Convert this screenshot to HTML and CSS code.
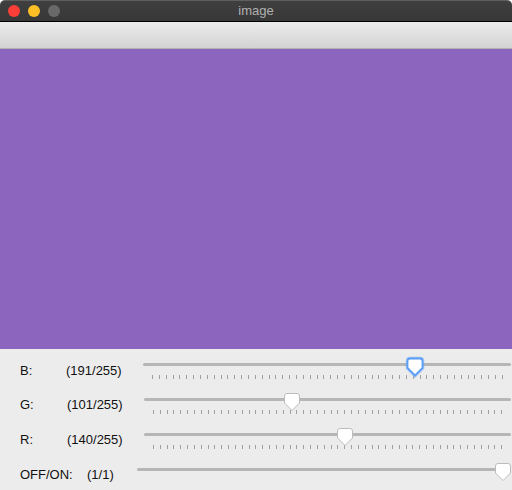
FILE: index.html
```html
<!DOCTYPE html>
<html>
<head>
<meta charset="utf-8">
<link rel="stylesheet" href="styles.css">
</head>
<body>
<div class="window">
  <div class="titlebar">
    <div class="lights">
      <span class="light red"></span>
      <span class="light yellow"></span>
      <span class="light gray"></span>
    </div>
    <div class="title">image</div>
    <div></div>
  </div>
  <div class="toolbar"></div>
  <div class="canvas"></div>
  <div class="controls">
    <div class="row row-b">
      <span class="name">B:</span>
      <span class="value">(191/255)</span>
      <div class="slider" style="--p:0.74902">
        <div class="track"></div>
        <div class="ticks"><i></i><i></i><i></i><i></i><i></i><i></i><i></i><i></i><i></i><i></i><i></i><i></i><i></i><i></i><i></i><i></i><i></i><i></i><i></i><i></i><i></i><i></i><i></i><i></i><i></i><i></i><i></i><i></i><i></i><i></i><i></i><i></i><i></i><i></i><i></i><i></i><i></i><i></i><i></i><i></i><i></i><i></i><i></i><i></i><i></i><i></i><i></i><i></i><i></i><i></i><i></i><i></i></div>
        <svg class="handle focus" width="16" height="18" viewBox="0 0 16 18"><path class="glow" d="M3 0.5 H13 Q15.5 0.5 15.5 3 V10 L8 17.5 L0.5 10 V3 Q0.5 0.5 3 0.5 Z"/><path class="body" d="M3 0.5 H13 Q15.5 0.5 15.5 3 V10 L8 17.5 L0.5 10 V3 Q0.5 0.5 3 0.5 Z"/></svg>
      </div>
    </div>
    <div class="row row-g">
      <span class="name">G:</span>
      <span class="value">(101/255)</span>
      <div class="slider" style="--p:0.39608">
        <div class="track"></div>
        <div class="ticks"><i></i><i></i><i></i><i></i><i></i><i></i><i></i><i></i><i></i><i></i><i></i><i></i><i></i><i></i><i></i><i></i><i></i><i></i><i></i><i></i><i></i><i></i><i></i><i></i><i></i><i></i><i></i><i></i><i></i><i></i><i></i><i></i><i></i><i></i><i></i><i></i><i></i><i></i><i></i><i></i><i></i><i></i><i></i><i></i><i></i><i></i><i></i><i></i><i></i><i></i><i></i><i></i></div>
        <svg class="handle" width="16" height="18" viewBox="0 0 16 18"><path class="body" d="M3 0.5 H13 Q15.5 0.5 15.5 3 V10 L8 17.5 L0.5 10 V3 Q0.5 0.5 3 0.5 Z"/></svg>
      </div>
    </div>
    <div class="row row-r">
      <span class="name">R:</span>
      <span class="value">(140/255)</span>
      <div class="slider" style="--p:0.54902">
        <div class="track"></div>
        <div class="ticks"><i></i><i></i><i></i><i></i><i></i><i></i><i></i><i></i><i></i><i></i><i></i><i></i><i></i><i></i><i></i><i></i><i></i><i></i><i></i><i></i><i></i><i></i><i></i><i></i><i></i><i></i><i></i><i></i><i></i><i></i><i></i><i></i><i></i><i></i><i></i><i></i><i></i><i></i><i></i><i></i><i></i><i></i><i></i><i></i><i></i><i></i><i></i><i></i><i></i><i></i><i></i><i></i></div>
        <svg class="handle" width="16" height="18" viewBox="0 0 16 18"><path class="body" d="M3 0.5 H13 Q15.5 0.5 15.5 3 V10 L8 17.5 L0.5 10 V3 Q0.5 0.5 3 0.5 Z"/></svg>
      </div>
    </div>
    <div class="row row-onoff">
      <span class="name">OFF/ON:</span>
      <span class="value">(1/1)</span>
      <div class="slider" style="--p:1">
        <div class="track"></div>
        <svg class="handle" width="16" height="18" viewBox="0 0 16 18"><path class="body" d="M3 0.5 H13 Q15.5 0.5 15.5 3 V10 L8 17.5 L0.5 10 V3 Q0.5 0.5 3 0.5 Z"/></svg>
      </div>
    </div>
  </div>
</div>
</body>
</html>
```
FILE: styles.css
```css
* { box-sizing: border-box; }
html, body {
  margin: 0;
  padding: 0;
  background: #ffffff;
}
.window {
  width: 512px;
  height: 490px;
  overflow: hidden;
  font-family: "Liberation Sans", Arial, sans-serif;
}
.titlebar {
  height: 22px;
  display: grid;
  grid-template-columns: 1fr auto 1fr;
  align-items: center;
  background: linear-gradient(#3f3f3f, #383838);
  border-top: 1px solid #5f5f5f;
  border-bottom: 1px solid #000;
  border-radius: 5px 5px 0 0;
}
.lights {
  display: flex;
  gap: 8px;
  padding-left: 8px;
}
.light {
  width: 12px;
  height: 12px;
  border-radius: 50%;
}
.light.red { background: #fb3f38; }
.light.yellow { background: #fdbf26; }
.light.gray { background: #696969; }
.title {
  font-size: 13px;
  color: #b1b1b1;
  line-height: 16px;
}
.toolbar {
  height: 27px;
  background: linear-gradient(#ececec, #d3d3d3);
  border-bottom: 1px solid #b2b2b2;
}
.canvas {
  height: 300px;
  background: rgb(140, 101, 191);
}
.controls {
  height: 141px;
  background: #ececec;
}
.row {
  display: flex;
  height: 35px;
  font-size: 13px;
  line-height: 15px;
  color: #111;
}
.name {
  padding-left: 20px;
  padding-top: 12.5px;
  width: 67px;
}
.value {
  padding-top: 12.5px;
  width: 77px;
}
.row-b .name { width: 66px; padding-top: 14px; }
.row-b .value { padding-top: 14px; }
.row-onoff .name { width: 87px; }
.row-onoff .value { width: 50px; }
.slider {
  flex: 1;
  position: relative;
}
.track {
  margin-top: 14px;
  margin-right: 1px;
  height: 3px;
  border-radius: 1.5px;
  background: #b6b6b6;
}
.ticks {
  margin: 9px 9px 0 9px;
  height: 4px;
  display: flex;
  justify-content: space-between;
}
.ticks i {
  width: 1px;
  height: 4px;
  background: #a0a0a0;
}
.handle {
  position: absolute;
  top: 9px;
  left: calc(var(--p) * (100% - 19px) + 1.5px);
  overflow: visible;
}
.handle .body {
  fill: #ffffff;
  stroke: #bcbcbc;
  stroke-width: 1;
}
.handle.focus .glow {
  fill: none;
  stroke: rgba(110, 165, 245, 0.55);
  stroke-width: 3.5;
}
.handle.focus .body {
  stroke: #5b9ef6;
  stroke-width: 1.8;
}
```
